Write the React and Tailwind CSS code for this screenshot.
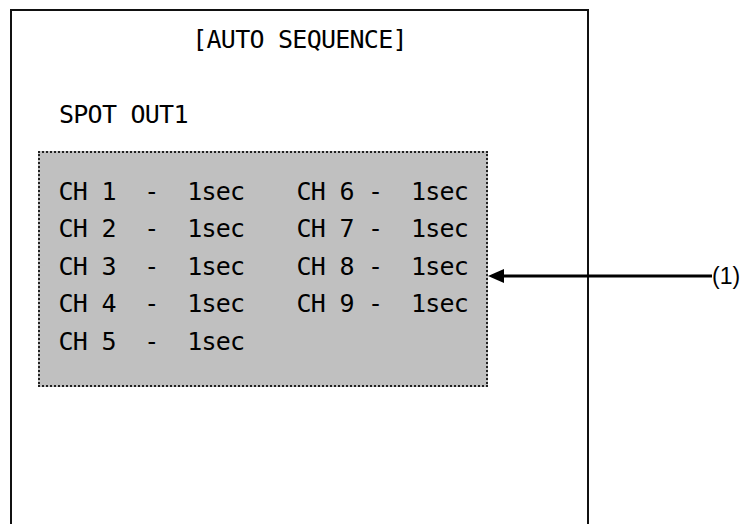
const LEFT = ['CH 1  -  1sec', 'CH 2  -  1sec', 'CH 3  -  1sec', 'CH 4  -  1sec', 'CH 5  -  1sec'];
const RIGHT = ['CH 6 -  1sec', 'CH 7 -  1sec', 'CH 8 -  1sec', 'CH 9 -  1sec'];

const mono = "font-['DejaVu_Sans_Mono',monospace] text-[25px] leading-[37.5px] tracking-[-0.75px] text-black whitespace-pre";

const Arrow = () => (
  <svg width="224" height="16" viewBox="0 0 224 16" fill="none">
    <path d="M0 8L16 1V15Z" fill="#000" />
    <rect x="14" y="6.5" width="210" height="3" fill="#000" />
  </svg>
);

export default function App() {
  return (
    <div className="relative h-[524px] w-[743px] overflow-hidden bg-white pl-[10px] pt-[9px]">
      <div className="h-full w-[579px] border-2 border-b-0 border-[#111] px-[26px] pt-[10px]">
        <div className={`${mono} text-center`}>[AUTO SEQUENCE]</div>
        <div className={`${mono} mt-[37.5px] pl-[21px]`}>SPOT OUT1</div>

        <div className="mt-[17.7px] flex h-[236px] w-[450px] border-2 border-dotted border-[#222] bg-[#c0c0c0] pl-[18.5px] pt-[19.5px]">
          <div className="flex w-[238px] flex-col">
            {LEFT.map((row) => (
              <div key={row} className={mono}>{row}</div>
            ))}
          </div>
          <div className="flex flex-col">
            {RIGHT.map((row) => (
              <div key={row} className={mono}>{row}</div>
            ))}
          </div>
        </div>
      </div>

      {/* callout */}
      <div className="absolute left-[488px] top-[260px] flex items-center">
        <Arrow />
        <span className="font-['Liberation_Sans',Arial,sans-serif] text-[23px] leading-[32px] text-black">
          (1)
        </span>
      </div>
    </div>
  );
}
